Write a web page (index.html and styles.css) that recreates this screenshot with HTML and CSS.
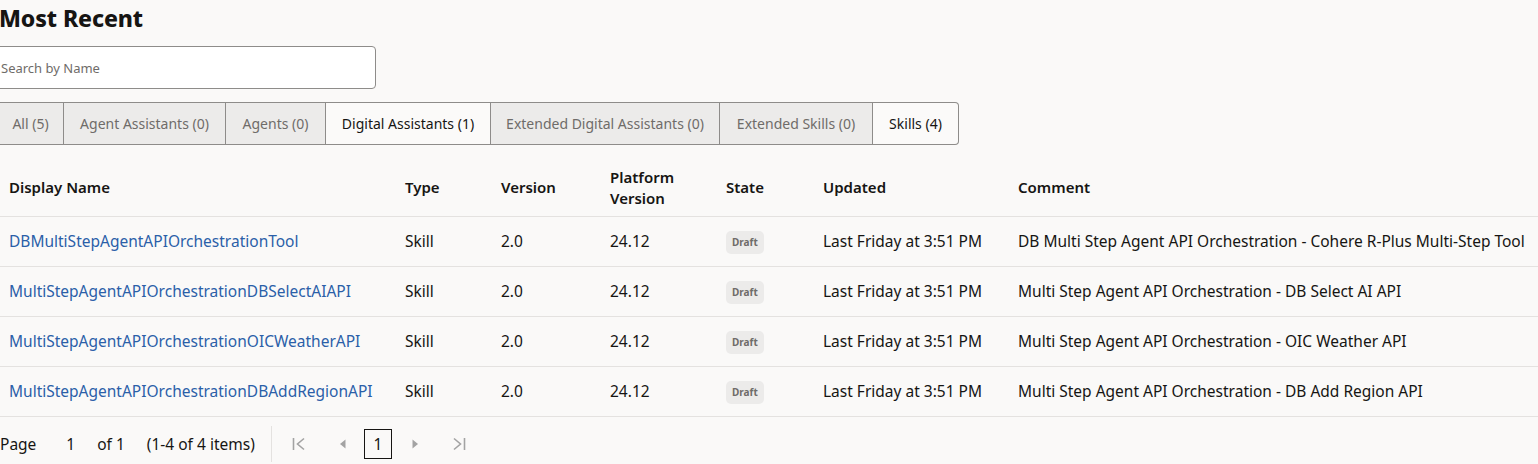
FILE: index.html
```html
<!DOCTYPE html>
<html lang="en">
<head>
<meta charset="utf-8">
<title>Most Recent</title>
<link rel="stylesheet" href="styles.css">
</head>
<body>
<main class="page">
  <h2 class="title">Most Recent</h2>
  <div class="search">
    <input class="search-input" type="text" placeholder="Search by Name">
  </div>
  <div class="tabs">
    <button class="tab">All (5)</button>
    <button class="tab">Agent Assistants (0)</button>
    <button class="tab">Agents (0)</button>
    <button class="tab tab-on">Digital Assistants (1)</button>
    <button class="tab">Extended Digital Assistants (0)</button>
    <button class="tab">Extended Skills (0)</button>
    <button class="tab tab-on tab-last">Skills (4)</button>
  </div>
  <table class="grid">
    <colgroup>
      <col class="c-name"><col class="c-type"><col class="c-ver"><col class="c-plat"><col class="c-state"><col class="c-upd"><col class="c-comm">
    </colgroup>
    <thead>
      <tr>
        <th>Display Name</th><th>Type</th><th>Version</th><th>Platform<br>Version</th><th>State</th><th>Updated</th><th>Comment</th>
      </tr>
    </thead>
    <tbody>
      <tr>
        <td><a class="link" href="#">DBMultiStepAgentAPIOrchestrationTool</a></td><td>Skill</td><td>2.0</td><td>24.12</td><td><span class="badge">Draft</span></td><td>Last Friday at 3:51 PM</td><td>DB Multi Step Agent API Orchestration - Cohere R-Plus Multi-Step Tool</td>
      </tr>
      <tr>
        <td><a class="link" href="#">MultiStepAgentAPIOrchestrationDBSelectAIAPI</a></td><td>Skill</td><td>2.0</td><td>24.12</td><td><span class="badge">Draft</span></td><td>Last Friday at 3:51 PM</td><td>Multi Step Agent API Orchestration - DB Select AI API</td>
      </tr>
      <tr>
        <td><a class="link" href="#">MultiStepAgentAPIOrchestrationOICWeatherAPI</a></td><td>Skill</td><td>2.0</td><td>24.12</td><td><span class="badge">Draft</span></td><td>Last Friday at 3:51 PM</td><td>Multi Step Agent API Orchestration - OIC Weather API</td>
      </tr>
      <tr>
        <td><a class="link" href="#">MultiStepAgentAPIOrchestrationDBAddRegionAPI</a></td><td>Skill</td><td>2.0</td><td>24.12</td><td><span class="badge">Draft</span></td><td>Last Friday at 3:51 PM</td><td>Multi Step Agent API Orchestration - DB Add Region API</td>
      </tr>
    </tbody>
  </table>
  <div class="pager">
    <div class="pager-info">
      <span class="p-label">Page</span>
      <span class="p-num">1</span>
      <span class="p-of">of 1</span>
      <span class="p-items">(1-4 of 4 items)</span>
    </div>
    <div class="pager-nav">
      <span class="nav-icon"><svg width="14" height="16" viewBox="0 0 14 16"><path d="M1.5 2v12" stroke="#a3a3a3" stroke-width="1.6" fill="none"/><path d="M12 2.5L5.5 8l6.5 5.5" stroke="#a3a3a3" stroke-width="1.6" fill="none"/></svg></span>
      <span class="nav-icon nav-small"><svg width="8" height="12" viewBox="0 0 8 12"><path d="M6.5 1.5v9L1 6z" fill="#a3a3a3"/></svg></span>
      <span class="page-box">1</span>
      <span class="nav-icon nav-small"><svg width="8" height="12" viewBox="0 0 8 12"><path d="M1.5 1.5v9L7 6z" fill="#a3a3a3"/></svg></span>
      <span class="nav-icon"><svg width="14" height="16" viewBox="0 0 14 16"><path d="M12.5 2v12" stroke="#a3a3a3" stroke-width="1.6" fill="none"/><path d="M2 2.5L8.5 8 2 13.5" stroke="#a3a3a3" stroke-width="1.6" fill="none"/></svg></span>
    </div>
  </div>
</main>
</body>
</html>
```

FILE: styles.css
```css
* { box-sizing: border-box; }
html, body {
  margin: 0;
  padding: 0;
  background: #faf9f8;
  overflow: hidden;
}
body {
  font-family: "Noto Sans", "Open Sans", sans-serif;
  color: #161513;
  width: 1538px;
  height: 464px;
}
.page {
  margin-left: -3px;
  display: flex;
  flex-direction: column;
}
.title {
  margin: 3px 0 0 2px;
  font-size: 23px;
  font-weight: 800;
  line-height: 30px;
  letter-spacing: -0.1px;
}
.search {
  margin-top: 13px;
  margin-left: -9px;
}
.search-input {
  width: 388px;
  height: 43px;
  border: 1px solid #8e8c8a;
  border-radius: 4px;
  background: #ffffff;
  padding: 0 0 0 12px;
  font-family: inherit;
  font-size: 13px;
  color: #161513;
  outline: none;
}
.search-input::placeholder { color: #6f6c69; }
.tabs {
  margin-top: 13px;
  display: flex;
  align-self: flex-start;
}
.tab {
  height: 43px;
  border: 1px solid #8e8c8a;
  border-left: none;
  background: #ecebea;
  color: #6f6c69;
  font-family: inherit;
  font-size: 14px;
  padding: 0;
  display: flex;
  align-items: center;
  justify-content: center;
  white-space: nowrap;
}
.tab:nth-child(1) { width: 67px; border-left: 1px solid #8e8c8a; }
.tab:nth-child(2) { width: 162px; }
.tab:nth-child(3) { width: 100px; }
.tab:nth-child(4) { width: 165px; }
.tab:nth-child(5) { width: 229px; }
.tab:nth-child(6) { width: 153px; }
.tab:nth-child(7) { width: 86px; }
.tab-on { background: #fbfaf9; color: #161513; }
.tab-last { border-radius: 0 4px 4px 0; }
.grid {
  margin-top: 15px;
  width: 1545px;
  border-collapse: collapse;
  table-layout: fixed;
  font-size: 15.5px;
}
.c-name { width: 396px; }
.c-type { width: 96px; }
.c-ver { width: 109px; }
.c-plat { width: 116px; }
.c-state { width: 97px; }
.c-upd { width: 195px; }
.grid th {
  text-align: left;
  font-weight: 600;
  font-size: 15px;
  height: 56px;
  padding: 0 0 0 12px;
  line-height: 21px;
  border-bottom: 1px solid #e4e2e0;
  vertical-align: middle;
}
.grid td {
  height: 50px;
  padding: 0 0 0 12px;
  border-bottom: 1px solid #e4e2e0;
  white-space: nowrap;
  vertical-align: middle;
}
.link {
  color: #2b5fa8;
  text-decoration: none;
}
.badge {
  display: inline-block;
  background: #ecebea;
  color: #6f6c69;
  font-size: 10px;
  font-weight: 700;
  padding: 0 6px;
  line-height: 23px;
  border-radius: 5px;
}
.pager {
  display: flex;
  align-items: center;
  height: 48px;
  font-size: 15.5px;
}
.pager-info {
  display: flex;
  align-items: center;
  width: 275px;
  height: 36px;
  margin-top: 6px;
  border-right: 1px solid #e4e2e0;
}
.p-label { margin-left: 3px; }
.p-num { margin-left: 30px; }
.p-of { margin-left: 22px; }
.p-items { margin-left: 22px; }
.pager-nav {
  display: flex;
  align-items: center;
  margin-top: 6px;
  height: 36px;
  padding-left: 20px;
}
.nav-icon { display: flex; align-items: center; }
.nav-icon:first-child { margin-right: 33px; }
.nav-small + .page-box { margin-left: 17px; }
.page-box {
  width: 28px;
  height: 30px;
  border: 1px solid #161513;
  display: flex;
  align-items: center;
  justify-content: center;
  margin-right: 19px;
}
.page-box + .nav-small { margin-right: 33px; }
```
